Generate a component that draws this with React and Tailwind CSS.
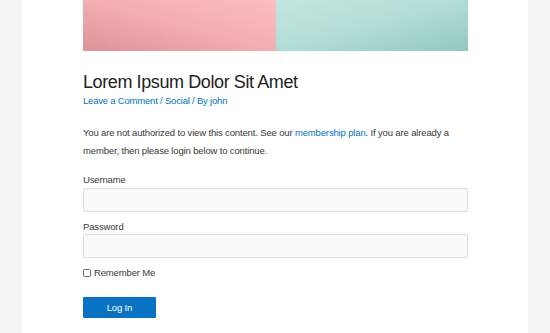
export default function App() {
  return (
    <div className="min-h-[333px] w-[550px] bg-[#f5f5f5] font-['Liberation_Sans',Arial,sans-serif]">
      <div className="mx-[22px] min-h-[333px] bg-white pl-[61px] pr-[60px]">
        {/* featured image */}
        <div className="flex h-[51px] w-[385px]">
          <div className="w-[193px] bg-gradient-to-tr from-[#dd9399] via-[#f2aeb0] to-[#fbbdbd]" />
          <div className="flex-1 bg-gradient-to-br from-[#c4e6e0] via-[#b1ddd6] to-[#94c8c0]" />
        </div>

        <h1 className="mt-[20px] text-[18px] leading-[22px] tracking-[-0.4px] text-[#222]">Lorem Ipsum Dolor Sit Amet</h1>
        <div className="mt-[1px] text-[9.5px] leading-[14px] tracking-[-0.2px] text-[#0274be]">
          <a href="#">Leave a Comment</a> / <a href="#">Social</a> / By <a href="#">john</a>
        </div>

        <p className="mt-[16px] text-[9.5px] leading-[17.5px] tracking-[-0.15px] text-[#3a3a3a]">
          You are not authorized to view this content. See our{' '}
          <a href="#" className="text-[#0274be]">membership plan</a>. If you are already a member, then please login below to continue.
        </p>

        <form className="mt-[14px] text-[9.5px] leading-[14px] tracking-[-0.15px] text-[#3a3a3a]">
          <label className="block">Username</label>
          <input type="text" className="mt-[1px] block h-[24px] w-full rounded-[2px] border border-[#dddddd] bg-[#fafafa]" />

          <label className="mt-[8px] block">Password</label>
          <input type="password" className="block h-[24px] w-full rounded-[2px] border border-[#dddddd] bg-[#fafafa]" />

          <label className="mt-[8px] flex items-center gap-[3px]">
            <span className="h-[8px] w-[8px] rounded-[1.5px] border border-[#666] bg-white" />
            Remember Me
          </label>

          <button type="button" className="mt-[17px] block h-[21px] w-[73px] rounded-[1px] bg-[#0a72c2] text-[9.5px] text-white">
            Log In
          </button>
        </form>
      </div>
    </div>
  );
}
